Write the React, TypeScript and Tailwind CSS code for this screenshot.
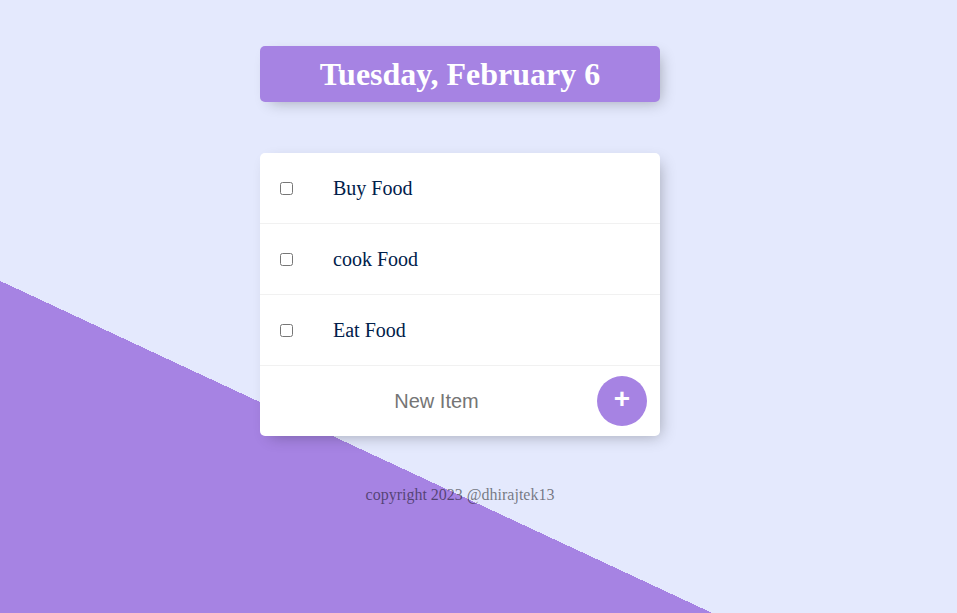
export default function App() {
  const items = ['Buy Food', 'cook Food', 'Eat Food']

  return (
    <div className="min-h-[1008px] w-full bg-[linear-gradient(25deg,#A683E3_50%,#E4E9FD_50%)] pt-[46px]">
      <div className="w-[920px]">
        <div className="mx-auto w-[400px] rounded-[5px] bg-[#A683E3] shadow-[5px_5px_15px_-5px_rgba(0,0,0,0.3)]">
          <h1 className="p-[10px] text-center font-['Liberation_Serif',serif] text-[32px] font-bold leading-[36px] text-white">
            Tuesday, February 6
          </h1>
        </div>

        <div className="mx-auto mt-[51px] w-[400px] rounded-[5px] bg-white shadow-[5px_5px_15px_-5px_rgba(0,0,0,0.3)]">
          {items.map((item) => (
            <div key={item} className="flex min-h-[71px] items-center border-b border-[#F1F1F1]">
              <input type="checkbox" className="m-5 h-[13px] w-[13px]" />
              <p className="p-5 font-['Liberation_Serif',serif] text-[20px] leading-[23px] text-[#00204a]">{item}</p>
            </div>
          ))}
          <form className="flex min-h-[70px] items-center" onSubmit={(e) => e.preventDefault()}>
            <input
              type="text"
              placeholder="New Item"
              className="ml-5 h-[60px] w-[313px] text-center font-['Liberation_Sans',sans-serif] text-[20px] text-[#00204a] outline-none placeholder:text-[#757575]"
            />
            <button
              type="submit"
              className="ml-[4px] flex h-[50px] w-[50px] items-center justify-center rounded-full bg-[#A683E3] pb-[5px] font-['Liberation_Sans',sans-serif] text-[28px] font-bold leading-none text-white"
            >
              +
            </button>
          </form>
        </div>

        <footer className="mt-[50px] text-center font-['Liberation_Serif',serif] text-[16px] leading-[18px] text-[rgba(0,0,0,0.5)]">
          copyright 2023 @dhirajtek13
        </footer>
      </div>
    </div>
  )
}
